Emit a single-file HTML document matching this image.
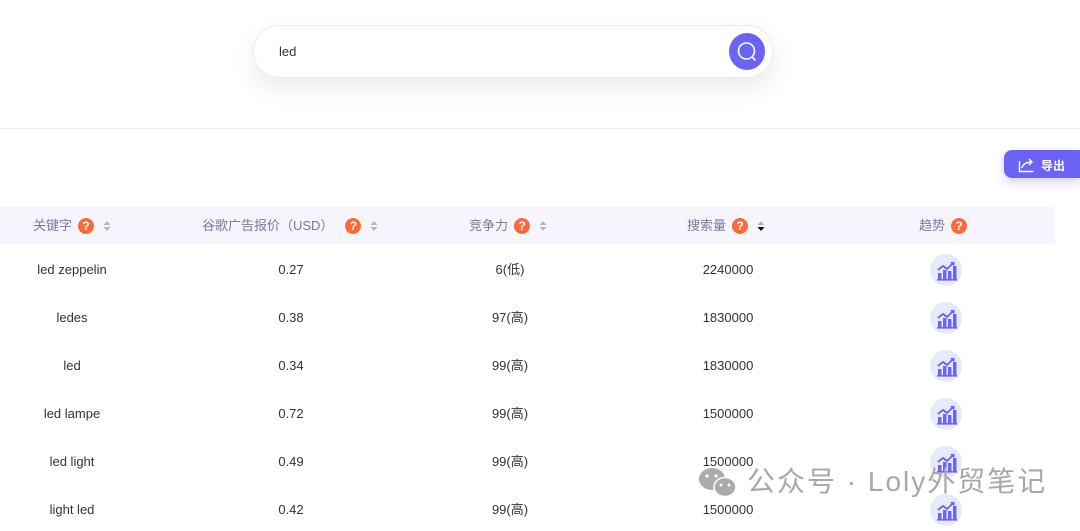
<!DOCTYPE html>
<html><head><meta charset="utf-8"><style>
body{margin:0;width:1080px;height:524px;overflow:hidden;background:#fff;font-family:"Liberation Sans","Noto Sans CJK SC",sans-serif;position:relative}
.abs{position:absolute}
.search{left:253px;top:25px;width:518px;height:51px;border-radius:26px;border:1px solid #ececf2;background:#fff;box-shadow:0 10px 24px rgba(60,60,110,.10)}
.search span{position:absolute;left:25px;top:18px;font-size:13px;color:#333}
.btn{position:absolute;right:7px;top:7px;width:36px;height:37px;border-radius:50%;background:#6b63f5}
.hr{left:0;top:128px;width:1080px;height:1px;background:#ebebf0}
.exp{left:1004px;top:150px;width:76px;height:28px;border-radius:8px 0 0 8px;background:#6b63f5;box-shadow:0 4px 10px rgba(107,99,245,.3);color:#fff;font-size:12px;font-weight:bold}
.head{left:0;top:207px;width:1055px;height:37px;background:#f6f5fe}
.th{position:absolute;top:0;height:37px;line-height:37px;font-size:13px;color:#7b7b9a;white-space:nowrap}
.q{display:inline-block;width:16px;height:16px;border-radius:50%;background:#fb6a3a;color:#fff;font-size:12px;font-weight:bold;line-height:16px;text-align:center;vertical-align:middle;margin-left:6px;position:relative;top:-1px}
.s{display:inline-block;vertical-align:middle;margin-left:9px;position:relative;top:-1px}
.cell{position:absolute;font-size:13px;line-height:16px;height:16px;color:#333;transform:translateX(-50%);white-space:nowrap}
.ic{position:absolute;width:32px;height:32px;border-radius:50%;background:#e8e8fd}
.wm{top:464px;font-size:28px;line-height:36px;color:#a8a8a8;letter-spacing:2px}
</style></head><body>
<div class="abs search"><span>led</span><div class="btn"><svg width="36" height="37" viewBox="0 0 36 37"><circle cx="17.5" cy="18" r="8" fill="none" stroke="#fff" stroke-width="1.6"/><path d="M23 24l3 3" stroke="#fff" stroke-width="1.6" stroke-linecap="round"/></svg></div></div>
<div class="abs hr"></div>
<div class="abs exp"><svg class="abs" style="left:14px;top:6px" width="18" height="17" viewBox="0 0 18 17"><path d="M1.5 5v10.5h14" fill="none" stroke="#fff" stroke-width="1.4"/><path d="M4 12c1-4 4-6 10-6M11 3l3 3-3 3" fill="none" stroke="#fff" stroke-width="1.4"/></svg><span class="abs" style="left:37px;top:7px">导出</span></div>
<div class="abs head">
<div class="th" style="left:33px">关键字<span class="q">?</span><svg class="s" width="8" height="12"><path d="M4 1l3.5 4h-7zM4 11l3.5-4h-7z" fill="#b4b4c4"/></svg></div>
<div class="th" style="left:202px">谷歌广告报价（USD）<span class="q" style="margin-left:12px">?</span><svg class="s" width="8" height="12"><path d="M4 1l3.5 4h-7zM4 11l3.5-4h-7z" fill="#b4b4c4"/></svg></div>
<div class="th" style="left:469px">竞争力<span class="q">?</span><svg class="s" width="8" height="12"><path d="M4 1l3.5 4h-7zM4 11l3.5-4h-7z" fill="#b4b4c4"/></svg></div>
<div class="th" style="left:687px">搜索量<span class="q">?</span><svg class="s" width="8" height="12"><path d="M4 1l3.5 4h-7z" fill="#b4b4c4"/><path d="M4 11l3.5-4h-7z" fill="#111"/></svg></div>
<div class="th" style="left:919px">趋势<span class="q">?</span></div>
</div>
<div id="rows"></div>
<script>
var d=[["led zeppelin","0.27","6(低)","2240000"],["ledes","0.38","97(高)","1830000"],["led","0.34","99(高)","1830000"],["led lampe","0.72","99(高)","1500000"],["led light","0.49","99(高)","1500000"],["light led","0.42","99(高)","1500000"]];
var h="";d.forEach(function(r,i){var y=262+i*48;var xs=[72,291,510,728];r.forEach(function(t,j){h+='<div class="cell" style="left:'+xs[j]+'px;top:'+y+'px">'+t+'</div>'});
h+='<div class="ic" style="left:930px;top:'+(y-8)+'px"><svg width="32" height="32" viewBox="0 0 32 32"><rect x="8" y="19" width="3.5" height="6" fill="#6b63f5"/><rect x="13" y="16" width="3.5" height="9" fill="#6b63f5"/><rect x="18" y="17" width="3.5" height="8" fill="#6b63f5"/><rect x="23" y="12" width="3.5" height="13" fill="#6b63f5"/><rect x="7" y="25" width="20" height="1.6" fill="#6b63f5"/><path d="M8 16l5-4 4 3 6-6" fill="none" stroke="#6b63f5" stroke-width="1.8"/><path d="M20 8h4.5v4.5z" fill="#6b63f5"/></svg></div>'});
document.getElementById("rows").innerHTML=h;
</script>
<svg class="abs" style="left:697px;top:466px" width="42" height="34" viewBox="0 0 42 34"><ellipse cx="15" cy="13" rx="13" ry="11" fill="#ababab"/><ellipse cx="28" cy="21" rx="11" ry="9.5" fill="#ababab" stroke="#fff" stroke-width="1.5"/><circle cx="10" cy="10" r="1.6" fill="#fff"/><circle cx="19" cy="10" r="1.6" fill="#fff"/><circle cx="24" cy="19" r="1.4" fill="#fff"/><circle cx="32" cy="19" r="1.4" fill="#fff"/></svg>
<div class="abs wm" style="left:747px">公众号 · Loly外贸笔记</div>
</body></html>
